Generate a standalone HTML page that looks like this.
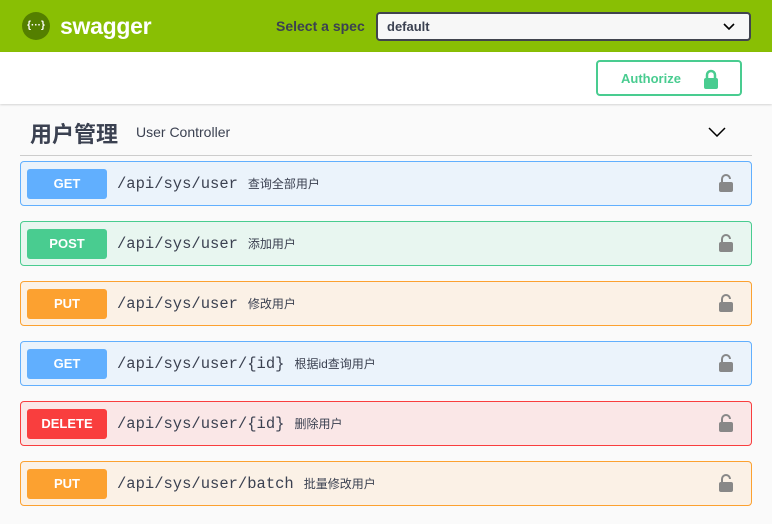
<!DOCTYPE html>
<html><head><meta charset="utf-8"><style>
*{box-sizing:border-box;margin:0;padding:0}
body{width:772px;height:524px;overflow:hidden;background:#fafafa;font-family:"Liberation Sans","Noto Sans CJK SC",sans-serif;}
.hdr{height:52px;background:#89bf04;position:relative}
.logo{position:absolute;left:22px;top:12px;width:28px;height:28px;border-radius:50%;background:#547f00;color:#fff;font-size:10px;text-align:center;line-height:28px;font-weight:bold}
.sw{position:absolute;left:60px;top:13px;color:#fff;font-weight:bold;font-size:23px;letter-spacing:-0.3px}
.sel{position:absolute;left:276px;top:18px;color:#3b4151;font-weight:bold;font-size:14px}
.box{position:absolute;left:376px;top:12px;width:375px;height:29px;border:2px solid #41444e;border-radius:4px;background:#f7f7f7;font-size:13px;font-weight:bold;color:#3b4151;padding:5px 9px}
.box svg{position:absolute;right:14px;top:9px}
.auth{height:52px;background:#fff;position:relative;box-shadow:0 1px 2px rgba(0,0,0,.15)}
.ab{position:absolute;left:596px;top:8px;width:146px;height:36px;border:2px solid #49cc90;border-radius:4px;color:#49cc90;font-weight:bold;font-size:13px;padding:9px 0 0 23px}
.ab svg{position:absolute;right:22px;top:7px}
.tag{position:absolute;left:20px;top:104px;width:732px;height:52px;border-bottom:1px solid #ccc}
.tag b{position:absolute;left:10px;top:13px;font-size:22px;color:#3b4151}
.tag span{position:absolute;left:116px;top:20px;font-size:14px;color:#3b4151}
.tag svg{position:absolute;right:26px;top:23px}
.op{position:absolute;left:20px;width:732px;height:45px;border:1px solid;border-radius:4px}
.m{position:absolute;left:6px;top:7px;width:80px;height:30px;border-radius:3px;color:#fff;font-weight:bold;font-size:13px;text-align:center;line-height:30px}
.p{position:absolute;left:96px;top:13px;font-family:"Liberation Mono","DejaVu Sans Mono",monospace;font-size:15.5px;color:#3b4151}
.p small{font-family:"Liberation Sans","Noto Sans CJK SC",sans-serif;font-size:12px;margin-left:10px}
.op svg{position:absolute;right:18px;top:12px}
.g{border-color:#61affe;background:#ebf3fb}.g .m{background:#61affe}
.po{border-color:#49cc90;background:#e8f6f0}.po .m{background:#49cc90}
.pu{border-color:#fca130;background:#fbf1e6}.pu .m{background:#fca130}
.d{border-color:#f93e3e;background:#fae7e7}.d .m{background:#f93e3e}
</style></head><body>
<div class="hdr"><div class="logo">{···}</div><div class="sw">swagger</div><div class="sel">Select a spec</div>
<div class="box">default<svg width="12" height="8"><path d="M1 1l5 5 5-5" stroke="#000" stroke-width="1.6" fill="none"/></svg></div></div>
<div class="auth"><div class="ab">Authorize<svg width="14" height="20"><path d="M3 10V6a4 4 0 0 1 8 0v4" stroke="#49cc90" stroke-width="2.5" fill="none"/><rect x="0" y="9" width="14" height="11" rx="2" fill="#49cc90"/></svg></div></div>
<div class="tag"><b>用户管理</b><span>User Controller</span><svg width="18" height="10"><path d="M1 1l8 8 8-8" stroke="#000" stroke-width="1.5" fill="none"/></svg></div>
<div class="op g" style="top:161px"><div class="m">GET</div><div class="p">/api/sys/user<small>查询全部用户</small></div><svg width="14" height="18"><path d="M3 8V5a4 4 0 0 1 8 0" stroke="#888" stroke-width="2" fill="none"/><rect x="0" y="8" width="14" height="10" rx="2" fill="#888"/></svg></div>
<div class="op po" style="top:221px"><div class="m">POST</div><div class="p">/api/sys/user<small>添加用户</small></div><svg width="14" height="18"><path d="M3 8V5a4 4 0 0 1 8 0" stroke="#888" stroke-width="2" fill="none"/><rect x="0" y="8" width="14" height="10" rx="2" fill="#888"/></svg></div>
<div class="op pu" style="top:281px"><div class="m">PUT</div><div class="p">/api/sys/user<small>修改用户</small></div><svg width="14" height="18"><path d="M3 8V5a4 4 0 0 1 8 0" stroke="#888" stroke-width="2" fill="none"/><rect x="0" y="8" width="14" height="10" rx="2" fill="#888"/></svg></div>
<div class="op g" style="top:341px"><div class="m">GET</div><div class="p">/api/sys/user/{id}<small>根据id查询用户</small></div><svg width="14" height="18"><path d="M3 8V5a4 4 0 0 1 8 0" stroke="#888" stroke-width="2" fill="none"/><rect x="0" y="8" width="14" height="10" rx="2" fill="#888"/></svg></div>
<div class="op d" style="top:401px"><div class="m">DELETE</div><div class="p">/api/sys/user/{id}<small>删除用户</small></div><svg width="14" height="18"><path d="M3 8V5a4 4 0 0 1 8 0" stroke="#888" stroke-width="2" fill="none"/><rect x="0" y="8" width="14" height="10" rx="2" fill="#888"/></svg></div>
<div class="op pu" style="top:461px"><div class="m">PUT</div><div class="p">/api/sys/user/batch<small>批量修改用户</small></div><svg width="14" height="18"><path d="M3 8V5a4 4 0 0 1 8 0" stroke="#888" stroke-width="2" fill="none"/><rect x="0" y="8" width="14" height="10" rx="2" fill="#888"/></svg></div>
</body></html>
